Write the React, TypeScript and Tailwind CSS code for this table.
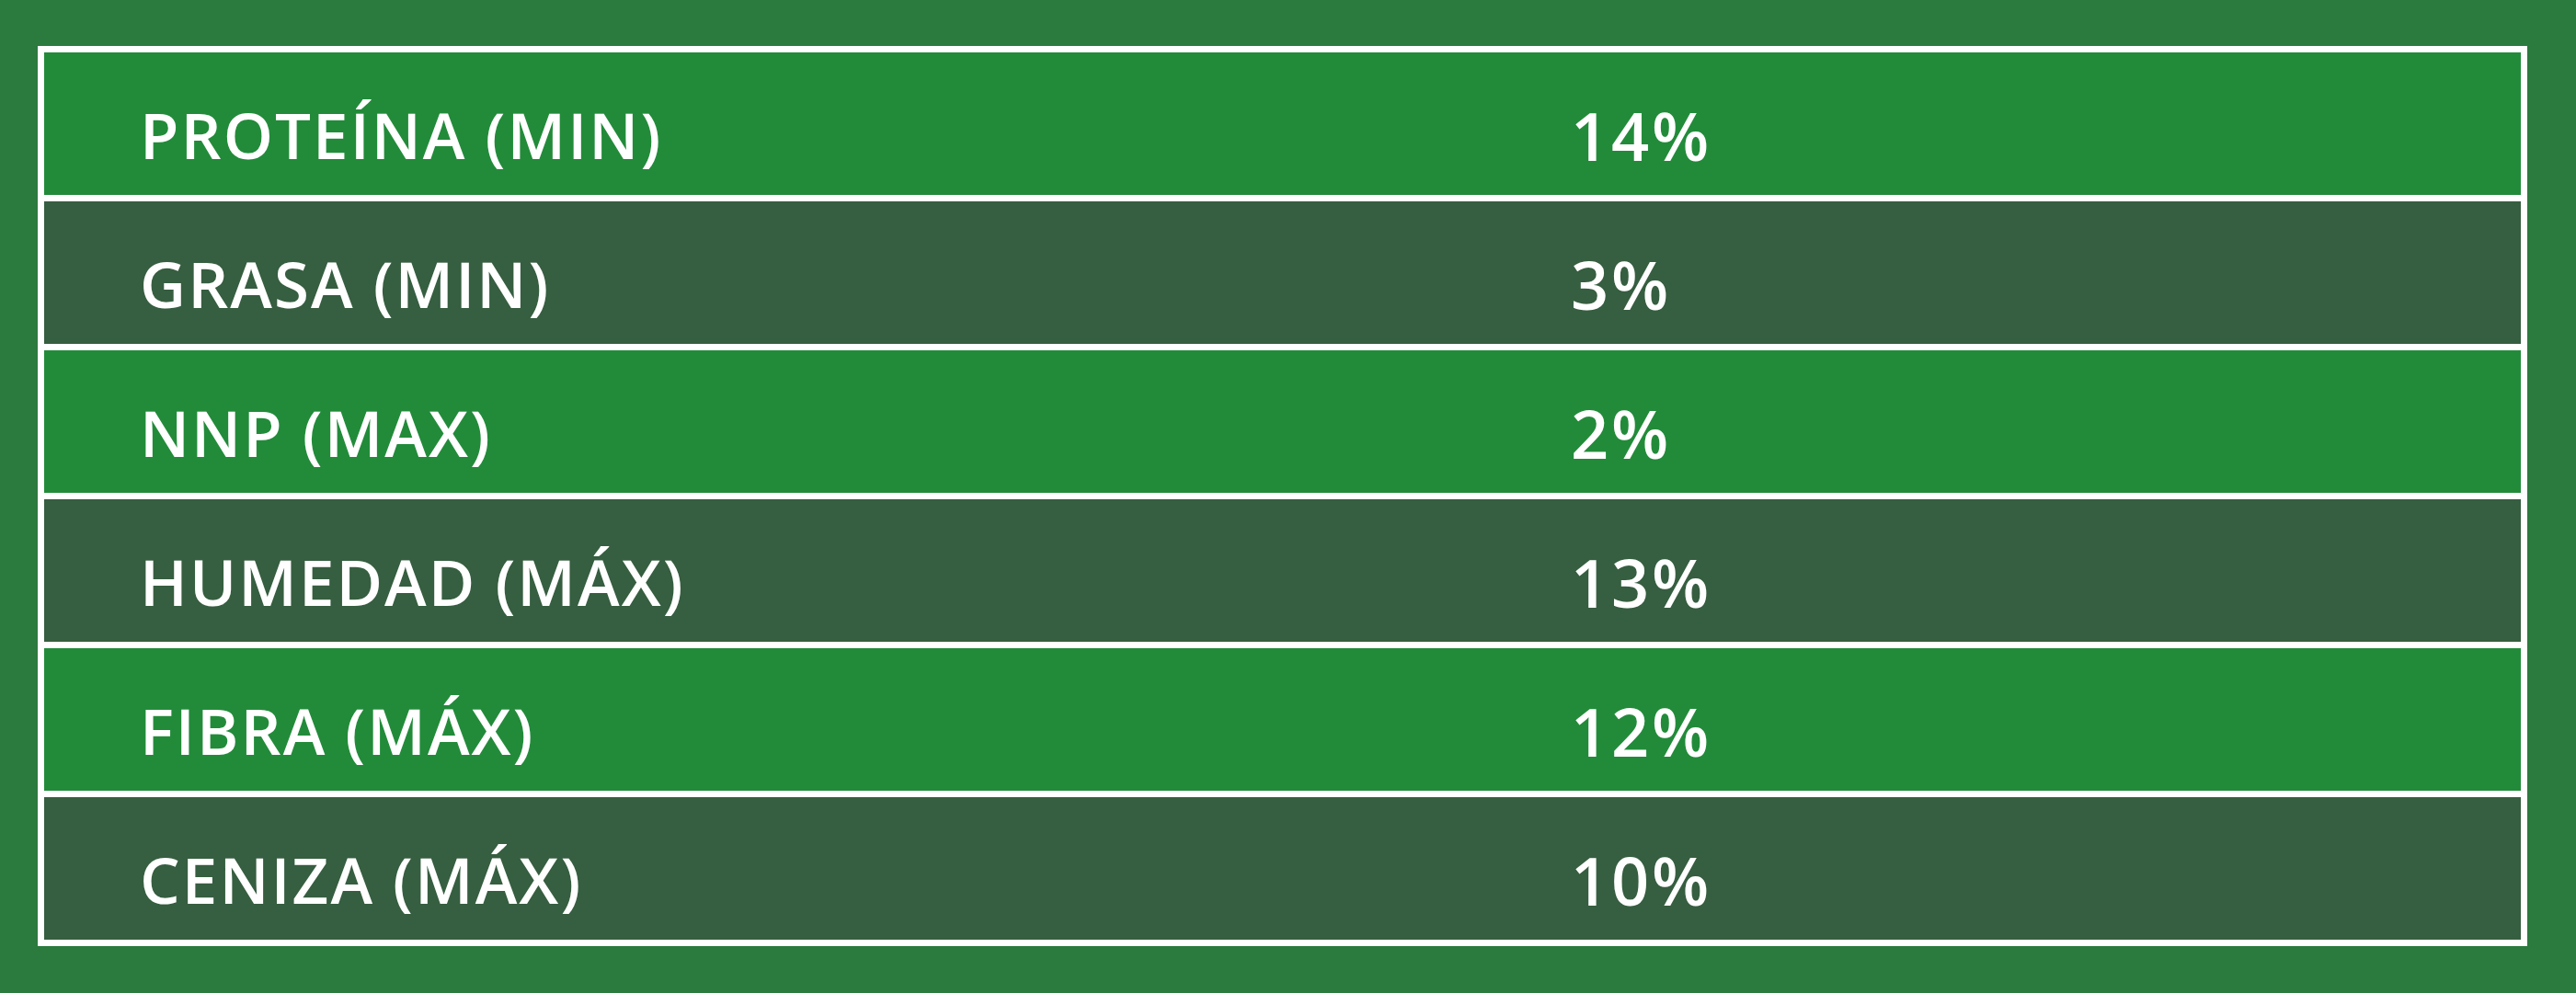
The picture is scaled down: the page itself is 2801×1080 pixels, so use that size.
type Row = { label: string; value: string }

const ROWS: Row[] = [
  { label: 'PROTEÍNA (MIN)', value: '14%' },
  { label: 'GRASA (MIN)',    value: '3%'  },
  { label: 'NNP (MAX)',      value: '2%'  },
  { label: 'HUMEDAD (MÁX)',  value: '13%' },
  { label: 'FIBRA (MÁX)',    value: '12%' },
  { label: 'CENIZA (MÁX)',   value: '10%' },
]

export default function App() {
  return (
    <div
      className="h-[1080px] w-[2801px] bg-[#2b7a3e] pl-[41px] pt-[50px]"
      style={{ fontFamily: '"Open Sans", "Noto Sans", sans-serif' }}
    >
      <div className="flex w-[2707px] flex-col gap-[7px] bg-white p-[7px]">
        {ROWS.map((r, i) => (
          <div
            key={r.label}
            className={`flex h-[155px] items-center pl-[104px] pt-[24px] text-[69px] font-semibold leading-none tracking-[0.03em] text-white ${
              i % 2 === 0 ? 'bg-[#228b3a]' : 'bg-[#365e40]'
            }`}
          >
            <span className="w-[1556px] shrink-0">{r.label}</span>
            <span className="text-[72px] tracking-[0.04em]">{r.value}</span>
          </div>
        ))}
      </div>
    </div>
  )
}
